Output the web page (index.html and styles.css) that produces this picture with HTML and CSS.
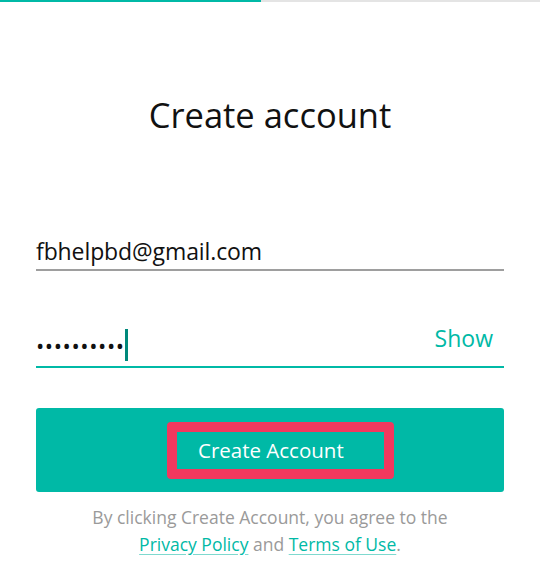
FILE: index.html
```html
<!DOCTYPE html>
<html lang="en">
<head>
    <meta charset="UTF-8">
    <meta name="viewport" content="width=device-width, initial-scale=1.0">
    <title>Create account</title>
    <link rel="stylesheet" href="styles.css">
</head>
<body>

    <!-- Step progress -->
    <div class="progress">
        <div class="progress-fill"></div>
    </div>

    <div class="signup">
        <h1 class="signup-title">Create account</h1>

        <!-- Email -->
        <div class="field">
            <span class="field-value">fbhelpbd@gmail.com</span>
        </div>

        <!-- Password -->
        <div class="field field-active">
            <span class="field-value password">••••••••••<span class="caret"></span></span>
            <span class="show-link">Show</span>
        </div>

        <button class="create-btn">
            <span class="create-btn-label">Create Account</span>
        </button>

        <p class="terms">
            By clicking Create Account, you agree to the<br>
            <a href="#">Privacy Policy</a> and <a href="#">Terms of Use</a>.
        </p>
    </div>

</body>
</html>
```

FILE: styles.css
```css
/* Basic Body Styles */
body {
    margin: 0;
    font-family: 'Open Sans', 'Noto Sans', sans-serif;
    color: #111111;
    background: #ffffff;
}

/* Top progress bar */
.progress {
    height: 2px;
    background-color: #e4e4e4;
}
.progress-fill {
    width: 261px;
    height: 100%;
    background-color: #00b9a6;
}

.signup {
    padding: 0 36px;
}

.signup-title {
    margin: 90px 0 0 0;
    text-align: center;
    font-size: 34.5px;
    font-weight: 400;
    line-height: 46px;
}

/* Inputs */
.field {
    display: flex;
    align-items: center;
    justify-content: space-between;
    height: 37px;
    border-bottom: 2px solid #9e9e9e;
}
.field:first-of-type {
    margin-top: 94px;
}
.field + .field {
    margin-top: 53px;
}
.field-active {
    border-bottom: 2px solid #00b9a6;
    height: 42px;
}

.field-value {
    font-size: 23px;
    letter-spacing: -0.1px;
}
.password {
    display: flex;
    align-items: center;
    font-size: 22px;
    letter-spacing: 0.6px;
}
.caret {
    display: inline-block;
    width: 3px;
    height: 32px;
    margin-left: 0;
    background-color: #00897b;
}

.show-link {
    color: #00b9a6;
    font-size: 23px;
    margin: 0 11px 14px 0;
}

/* Button */
.create-btn {
    display: flex;
    justify-content: center;
    align-items: center;
    width: 100%;
    height: 84px;
    margin-top: 40px;
    border: none;
    border-radius: 3px;
    background-color: #00b9a6;
    font-family: inherit;
    cursor: pointer;
}
.create-btn-label {
    display: block;
    width: 166px;
    height: 37px;
    line-height: 37px;
    margin-left: 21px;
    padding: 0 20px 0 21px;
    border: 10px solid #f2385e;
    border-radius: 4px;
    color: #ffffff;
    font-size: 20.5px;
    text-align: left;
}

/* Footer */
.terms {
    margin: 12px 0 0 0;
    text-align: center;
    color: #9a9a9a;
    font-size: 17.5px;
    line-height: 27px;
}
.terms a {
    color: #00b9a6;
    text-decoration: underline;
    text-decoration-color: #7fd9cf;
    text-underline-offset: 3px;
}
```
